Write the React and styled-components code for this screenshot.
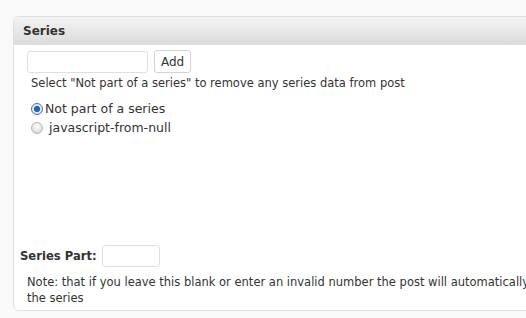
import React from 'react'
import styled, { createGlobalStyle } from 'styled-components'

const GlobalStyle = createGlobalStyle`
  html, body {
    margin: 0;
    padding: 0;
    background: #f9f9f9;
    overflow: hidden;
  }
  body {
    font-family: "DejaVu Sans", Verdana, sans-serif;
    color: #333;
  }
`

const Page = styled.div`
  padding: 16px 0 0 13px;
  height: 318px;
  box-sizing: border-box;
  overflow: hidden;
`

const Box = styled.div`
  width: 740px;
  background: #fff;
  border: 1px solid #dfdfdf;
  border-radius: 6px;
  overflow: hidden;
`

const BoxHeader = styled.h3`
  margin: 0;
  height: 26px;
  padding: 1px 9px 0;
  display: flex;
  align-items: center;
  font-size: 12px;
  font-weight: bold;
  color: #333;
  background: linear-gradient(to bottom, #f3f3f3, #dcdcdc);
  border-bottom: 1px solid #dfdfdf;
`

const Inside = styled.div`
  padding: 6px 6px 4px 13px;
`

const AddRow = styled.div`
  display: flex;
  align-items: center;
  gap: 6px;
`

const TextInput = styled.input`
  box-sizing: border-box;
  width: ${(p) => p.$width}px;
  height: 22px;
  border: 1px solid #dfdfdf;
  border-radius: 3px;
  background: #fff;
  margin: 0;
`

const Button = styled.button`
  box-sizing: border-box;
  height: 23px;
  padding: 0 6px;
  font-family: "DejaVu Sans", Verdana, sans-serif;
  font-size: 12px;
  color: #333;
  background: #fff;
  border: 1px solid #d4d4d4;
  border-radius: 3px;
  margin-top: -1px;
`

const Hint = styled.p`
  margin: 3px 0 0 4px;
  font-size: 11.5px;
  color: #333;
`

const RadioList = styled.ul`
  list-style: none;
  margin: 9px 0 0 4px;
  padding: 0;
`

const RadioItem = styled.li`
  display: flex;
  align-items: center;
  height: 19px;
  font-size: 12.5px;
  color: #333;
`

const Radio = styled.span`
  box-sizing: border-box;
  width: 12px;
  height: 12px;
  border-radius: 50%;
  border: 1px solid ${(p) => (p.$checked ? '#4e6f8e' : '#b5b5b5')};
  background: ${(p) =>
    p.$checked
      ? 'radial-gradient(circle, #1e63b6 0 2.5px, #5c8ec6 3px, #e4ecf5 3.6px)'
      : 'radial-gradient(circle at 50% 35%, #ffffff, #d0d0d0)'};
  margin-right: ${(p) => (p.$checked ? 2 : 6)}px;
  flex: none;
`

const Spacer = styled.div`
  height: 108px;
`

const PartRow = styled.div`
  display: flex;
  align-items: center;
  margin-left: -7px;
  gap: 5px;
`

const PartLabel = styled.label`
  font-size: 11.6px;
  font-weight: bold;
  color: #333;
`

const Note = styled.p`
  margin: 7px 0 0 0;
  font-size: 11.5px;
  line-height: 16px;
  color: #333;
  white-space: nowrap;
`

export default function App() {
  return (
    <Page>
      <GlobalStyle />
      <Box>
        <BoxHeader>Series</BoxHeader>
        <Inside>
          <AddRow>
            <TextInput $width={121} />
            <Button>Add</Button>
          </AddRow>
          <Hint>Select "Not part of a series" to remove any series data from post</Hint>
          <RadioList>
            <RadioItem>
              <Radio $checked />
              Not part of a series
            </RadioItem>
            <RadioItem>
              <Radio />
              javascript-from-null
            </RadioItem>
          </RadioList>
          <Spacer />
          <PartRow>
            <PartLabel>Series Part:</PartLabel>
            <TextInput $width={58} />
          </PartRow>
          <Note>
            Note: that if you leave this blank or enter an invalid number the post will automatically be added as the last post in
            <br />
            the series
          </Note>
        </Inside>
      </Box>
    </Page>
  )
}
